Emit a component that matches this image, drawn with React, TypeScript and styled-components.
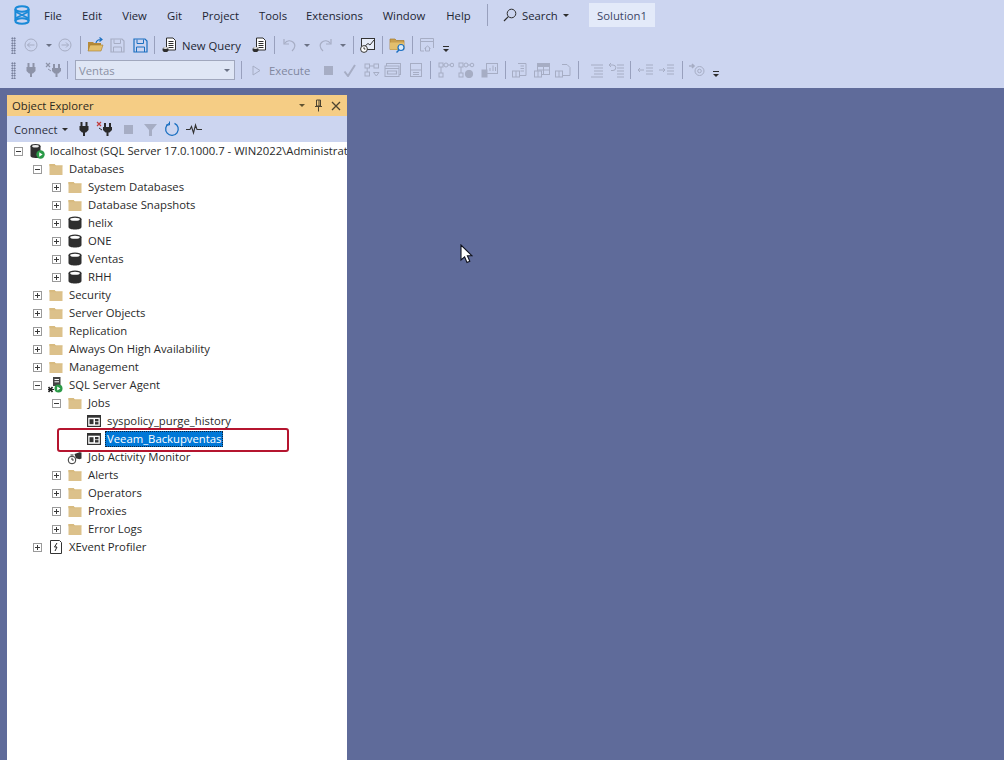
import React from "react";
import styled, { createGlobalStyle } from "styled-components";

const Global = createGlobalStyle`
  html, body { margin: 0; padding: 0; background: #5f6b9a; }
  * { box-sizing: border-box; }
  #root { width: 1004px; height: 760px; overflow: hidden; }
`;

const UI = `"Open Sans", Roboto, "Liberation Sans", sans-serif`;

const Page = styled.div`
  position: relative;
  width: 1004px;
  height: 760px;
  overflow: hidden;
  display: flex;
  flex-direction: column;
  background: #5f6b9a;
  font-family: ${UI};
  font-size: 11.3px;
  color: #222533;
`;
const Chrome = styled.header`
  height: 88px;
  background: #ccd5f0;
  display: flex;
  flex-direction: column;
`;
const MenuRow = styled.div`
  height: 30px;
  display: flex;
  align-items: center;
  padding-left: 14px;
`;
const Logo = styled.svg`
  width: 16px;
  height: 20px;
  margin-right: 4px;
`;
const MenuItem = styled.span<{ $w: number }>`
  width: ${(p) => p.$w}px;
  text-align: center;
  white-space: nowrap;
`;
const MenuDivider = styled.span`
  width: 1px;
  height: 22px;
  background: #98a0bd;
  margin: 0 15px 0 6px;
`;
const SearchBox = styled.div`
  width: 72px;
  display: flex;
  align-items: center;
  gap: 5px;
`;
const SolutionTag = styled.div`
  margin-left: 14px;
  width: 66px;
  height: 24px;
  background: #e3eaf9;
  display: flex;
  align-items: center;
  justify-content: center;
  color: #3c4566;
`;
const ToolRow = styled.div<{ $h: number }>`
  height: ${(p) => p.$h}px;
  display: flex;
  align-items: center;
  padding-left: 8px;
`;
const Slot = styled.span<{ $w: number }>`
  width: ${(p) => p.$w}px;
  flex: none;
  display: flex;
  align-items: center;
  justify-content: center;
  & > svg { flex: none; }
`;
const Grip = styled.span`
  width: 5px;
  height: 17px;
  margin: 0 4px 0 3px;
  flex: none;
  background-image: radial-gradient(circle, #5c6480 0.75px, transparent 0.95px);
  background-size: 2.5px 2.5px;
`;
const VSep = styled.span`
  width: 1px;
  height: 18px;
  background: #98a0bd;
  flex: none;
`;
const NewQueryLabel = styled.span`
  width: 68px;
  flex: none;
  color: #222533;
  white-space: nowrap;
`;
const ExecuteLabel = styled.span`
  width: 53px;
  padding-left: 4px;
  flex: none;
  color: #7f869e;
`;
const DbSelect = styled.div`
  width: 160px;
  height: 20px;
  flex: none;
  border: 1px solid #a0a7bd;
  background: #dfe6f5;
  color: #8b91a4;
  display: flex;
  align-items: center;
  justify-content: space-between;
  padding: 0 4px 0 3px;
`;
const Caret = styled.span<{ $c?: string }>`
  width: 0;
  height: 0;
  border-left: 3px solid transparent;
  border-right: 3px solid transparent;
  border-top: 3px solid ${(p) => p.$c ?? "#6b7285"};
  flex: none;
`;
const Overflow = styled.span`
  width: 6px;
  height: 6px;
  flex: none;
  margin-top: 7px;
  border-top: 1px solid #2d2d2d;
  display: flex;
  justify-content: center;
  padding-top: 2px;
  &::after {
    content: "";
    border-left: 3px solid transparent;
    border-right: 3px solid transparent;
    border-top: 3px solid #2d2d2d;
  }
`;
const Workspace = styled.main`
  flex: 1;
  min-height: 0;
  padding: 7px 0 0 7px;
  display: flex;
`;
const Panel = styled.section`
  width: 340px;
  display: flex;
  flex-direction: column;
  background: #fff;
  overflow: hidden;
`;
const PanelTitle = styled.div`
  height: 21px;
  background: #f5cd85;
  display: flex;
  align-items: center;
  padding-left: 5px;
  color: #2d2a22;
`;
const TitleText = styled.span`
  flex: 1;
`;
const TitleBtn = styled.span`
  width: 17px;
  display: flex;
  justify-content: center;
  align-items: center;
`;
const PanelTools = styled.div`
  height: 26px;
  background: #ccd5f0;
  display: flex;
  align-items: center;
  padding-left: 7px;
`;
const ConnectBtn = styled.span`
  width: 59px;
  flex: none;
  display: flex;
  align-items: center;
  gap: 4px;
  color: #2d3040;
`;
const Tree = styled.ul`
  list-style: none;
  margin: 0;
  padding: 0;
`;
const Row = styled.li<{ $level: number }>`
  height: 18px;
  display: flex;
  align-items: center;
  white-space: nowrap;
  padding-left: ${(p) => 7 + p.$level * 19}px;
  color: #2a2a2a;
`;
const Toggle = styled.span<{ $open?: boolean; $none?: boolean }>`
  width: 9px;
  height: 9px;
  flex: none;
  position: relative;
  border: 1px solid ${(p) => (p.$none ? "transparent" : "#9a9a9a")};
  margin-right: 6px;
  &::before {
    content: "";
    display: ${(p) => (p.$none ? "none" : "block")};
    position: absolute;
    left: 1px;
    top: 3px;
    width: 5px;
    height: 1px;
    background: #3a3a3a;
  }
  &::after {
    content: "";
    display: ${(p) => (p.$none || p.$open ? "none" : "block")};
    position: absolute;
    left: 3px;
    top: 1px;
    width: 1px;
    height: 5px;
    background: #3a3a3a;
  }
`;
const IconBox = styled.span`
  width: 16px;
  height: 16px;
  flex: none;
  display: flex;
  align-items: center;
  justify-content: center;
`;
const Label = styled.span<{ $selected?: boolean }>`
  margin-left: 3px;
  padding: 0 2px;
  height: 16px;
  line-height: 16px;
  background: ${(p) => (p.$selected ? "#0078d7" : "transparent")};
  color: ${(p) => (p.$selected ? "#fff" : "inherit")};
  outline: ${(p) => (p.$selected ? "1px dotted #10243a" : "none")};
  outline-offset: -1px;
`;
const Highlight = styled.div`
  position: absolute;
  left: 57px;
  top: 428px;
  width: 232px;
  height: 24px;
  border: 2px solid #b5152f;
  border-radius: 3px;
  pointer-events: none;
`;
const Cursor = styled.svg`
  position: absolute;
  left: 460px;
  top: 244px;
  width: 13px;
  height: 20px;
`;

const Ic = ({ w = 16, h = 16, children }: { w?: number; h?: number; children: React.ReactNode }) => (
  <svg width={w} height={h} viewBox={`0 0 ${w} ${h}`} fill="none">{children}</svg>
);

const G = "#a6adc4";
const D = "#2b2b2b";

const Folder = () => (
  <Ic>
    <path d="M1.5 3h5l1.3 1.6h6.7V14h-13z" fill="#dcc18b" />
    <path d="M1.5 3h5l1.3 1.6h6.7v.7h-13z" fill="#d8bb80" />
  </Ic>
);
const Db = () => (
  <Ic>
    <path d="M1.5 4v8c0 1.6 2.6 2.5 6.5 2.5s6.5-.9 6.5-2.5V4z" fill="#2e2e2e" />
    <ellipse cx="8" cy="4" rx="6.5" ry="2.6" fill="#2e2e2e" />
    <ellipse cx="8" cy="4.2" rx="4.8" ry="1.5" fill="#fff" />
  </Ic>
);
const JobIcon = () => (
  <Ic w={14} h={12}>
    <rect x="0.6" y="0.6" width="12.8" height="10.8" fill="#fff" stroke="#333" strokeWidth="1.2" />
    <rect x="0.5" y="0.5" width="13" height="2.2" fill="#333" />
    <rect x="2.5" y="4.2" width="4" height="5" fill="#333" />
    <rect x="8" y="4" width="3.5" height="2.4" fill="#333" />
    <rect x="8" y="7.1" width="3.5" height="2.4" fill="#333" />
  </Ic>
);
const ServerIcon = () => (
  <Ic>
    <path d="M1.5 3.5v9.5c0 1 2.3 2 5 2h5V3.5z" fill="#303030" />
    <ellipse cx="6.5" cy="3.2" rx="5" ry="2.2" fill="#303030" />
    <ellipse cx="6.5" cy="3.3" rx="3.4" ry="1.2" fill="#eee" />
    <circle cx="11.5" cy="11.5" r="4.2" fill="#2a9a47" />
    <path d="M10.2 9.3v4.4l3.4-2.2z" fill="#fff" />
  </Ic>
);
const AgentIcon = () => (
  <Ic>
    <rect x="5" y="0" width="7.5" height="9" fill="#444" />
    <path d="M6.5 2.5h4.5M6.5 4.8h4.5" stroke="#fff" />
    <path d="M0.5 10l4 5M4.5 10l-4 5" stroke="#222" strokeWidth="1.7" />
    <path d="M0 12.5h6" stroke="#222" />
    <circle cx="10.5" cy="11.5" r="4" fill="#2a9a47" />
    <path d="M9.2 9.5v4l3.2-2z" fill="#fff" />
  </Ic>
);
const MonitorIcon = () => (
  <Ic>
    <circle cx="5" cy="11" r="3.8" fill="#fff" stroke="#333" />
    <path d="M5 8.8V11h1.8" stroke="#333" />
    <path d="M3.5 6h3" stroke="#333" />
    <path d="M7.5 5l5-1.8 2 .3v6l-2 .8-3.6-1z" fill="#333" />
  </Ic>
);
const XEventIcon = () => (
  <Ic>
    <path d="M2.5 1.5h9l2 2v11h-11z" fill="#fff" stroke="#333" />
    <path d="M9 4L6.5 8H9l-2 4" stroke="#222" />
  </Ic>
);
const PlugIcon = ({ c = D }: { c?: string }) => (
  <Ic w={12} h={16}>
    <path d="M3.5 1v4M8.5 1v4" stroke={c} strokeWidth="2" />
    <path d="M1.5 5h9v4l-2.5 2.5H4L1.5 9z" fill={c} />
    <path d="M6 11v4" stroke={c} strokeWidth="2" />
  </Ic>
);
const UnplugIcon = ({ c = D, x = "#c23b3b" }: { c?: string; x?: string }) => (
  <Ic w={18} h={16}>
    <path d="M1 1l4 4M5 1L1 5" stroke={x} strokeWidth="1.2" />
    <path d="M9 2v4M14 2v4" stroke={c} strokeWidth="2" />
    <path d="M7 6h9v3l-2.5 2.5h-4L7 9z" fill={c} />
    <path d="M11.5 11v4" stroke={c} strokeWidth="2" />
    <path d="M3 7l3 2" stroke={c} />
  </Ic>
);
const NewQueryIcon = () => (
  <Ic>
    <path d="M4.5 1h6.5l2.5 2.5V13H4.5z" fill="#fff" stroke="#2e2e2e" />
    <path d="M6.5 4.5h5M6.5 6.5h5M6.5 8.5h5M6.5 10.5h5" stroke="#2e2e2e" />
    <ellipse cx="3.5" cy="12.5" rx="3" ry="2.6" fill="#2e2e2e" />
    <ellipse cx="3.5" cy="11" rx="2.4" ry="1" fill="#ddd" />
  </Ic>
);
const CircleArrow = ({ flip }: { flip?: boolean }) => (
  <Ic w={14} h={14}>
    <circle cx="7" cy="7" r="6" stroke={G} />
    <path d={flip ? "M3.5 7h7M8 4.5L10.5 7 8 9.5" : "M10.5 7h-7M6 4.5L3.5 7 6 9.5"} stroke={G} />
  </Ic>
);
const OpenFolder = () => (
  <Ic w={18} h={16}>
    <path d="M1 5h5l1 1h7v8H1z" fill="#b68a3a" />
    <path d="M1 14l2-6h13l-2 6z" fill="#e3bf6d" stroke="#a67c2c" strokeWidth="0.6" />
    <path d="M9 6c.5-2.5 2.5-3.5 5-3.5M12.5 0.5l2.5 2-2.5 2" stroke="#1a6fc0" strokeWidth="1.2" />
  </Ic>
);
const Save = ({ c }: { c: string }) => (
  <Ic w={15} h={15}>
    <path d="M1 1h11l2 2v11H1z" stroke={c} strokeWidth="1.2" />
    <path d="M4 1.5v4h6.5v-4M3.5 14V9h8v5" stroke={c} />
  </Ic>
);
const Undo = ({ flip }: { flip?: boolean }) => (
  <Ic>
    <g transform={flip ? "translate(16,0) scale(-1,1)" : undefined}>
      <path d="M2 2v5h5" stroke={G} strokeWidth="1.2" />
      <path d="M2.5 6.5C5 3 9 3 11.5 5.5c2.2 2.3 1.5 5.5-1.5 8.5" stroke={G} strokeWidth="1.2" />
    </g>
  </Ic>
);
const ChartBox = () => (
  <Ic>
    <rect x="1.5" y="1.5" width="13" height="11" fill="#e8edf9" stroke="#333" />
    <path d="M5 9l3-2.5 2 1.5 4-5" stroke="#333" />
    <circle cx="4" cy="12" r="3.4" fill="#fff" stroke="#333" />
    <path d="M4 10.3V12h1.4" stroke="#333" />
  </Ic>
);
const FolderSearch = () => (
  <Ic w={18} h={18}>
    <path d="M1 3h5l1.5 1.5h7.5v9H1z" fill="#c99f4e" stroke="#a67c2c" strokeWidth="0.7" />
    <path d="M1 6.5h14v7H1z" fill="#e3bf6d" />
    <circle cx="12" cy="11.5" r="3" fill="#dcecfa" stroke="#1a6fc0" strokeWidth="1.2" />
    <path d="M10 14l-2.5 2.5" stroke="#1a6fc0" strokeWidth="1.4" />
  </Ic>
);
const WindowHome = () => (
  <Ic>
    <path d="M5 14H1.5V1.5h13V11" stroke={G} />
    <path d="M1.5 4.5h13" stroke={G} />
    <path d="M5.5 11.5l3-2.5 3 2.5M6.5 11v3h4v-3" stroke={G} />
  </Ic>
);
const TinyBox = ({ x, y }: { x: number; y: number }) => (
  <g>
    <rect x={x} y={y} width="7" height="6" fill="#ccd5f0" stroke={G} />
    <path d={`M${x + 3.5} ${y}v6`} stroke={G} />
  </g>
);
const GreyBlock = ({ kind }: { kind: number }) => (
  <Ic w={18} h={16}>
    {kind === 0 && <g stroke={G}><rect x="2" y="2" width="4.5" height="4" /><rect x="11" y="2" width="4.5" height="4" /><rect x="2" y="10" width="4.5" height="4" /><path d="M10.5 10.5h5.5l-2.7 3.5z" /><path d="M6.5 4h4.5M4.2 6v4" /></g>}
    {kind === 1 && <g stroke={G}><rect x="2.5" y="1.5" width="14" height="11" /><rect x="1" y="4" width="14" height="10.5" fill="#ccd5f0" /><path d="M1 6.5h14M3.5 9h9v3h-9z" strokeWidth="1.2" /></g>}
    {kind === 2 && <g stroke={G}><rect x="3.5" y="1.5" width="11" height="13" /><path d="M3.5 8h11M6 10.5h6M6 12.5h6" /></g>}
    {kind === 3 && <g stroke={G}><rect x="3" y="1" width="4" height="4" /><rect x="3" y="11" width="4" height="4" /><circle cx="10" cy="3" r="2" /><circle cx="16" cy="3" r="1.8" /><path d="M5 5v6M7 3h1M12 3h2" /></g>}
    {kind === 4 && <g stroke={G}><rect x="1" y="1" width="4" height="4" /><rect x="1" y="11" width="4" height="4" /><circle cx="8" cy="3" r="2" /><circle cx="14" cy="3" r="1.8" /><path d="M3 5v6M10 3h2" /><circle cx="11" cy="12" r="3.7" fill={G} /></g>}
    {kind === 5 && <g stroke={G}><rect x="1" y="8" width="5" height="7" fill={G} /><rect x="5.5" y="1.5" width="11" height="10" /><path d="M9 9V6M12 9V3.5M14.5 9V5" /></g>}
    {kind === 6 && <g stroke={G}><path d="M7 1.5h8v12H9" /><path d="M9.5 4h3.5M9.5 6.5h3.5M9.5 9h3.5" /><TinyBox x={1.5} y={9} /></g>}
    {kind === 7 && <g stroke={G}><rect x="4.5" y="1.5" width="12" height="11" /><path d="M4.5 1.5h12v3h-12z" fill={G} /><path d="M4.5 8h12M10.5 1.5v11" /><TinyBox x={1.5} y={9} /></g>}
    {kind === 8 && <g stroke={G}><path d="M8 2.5h5l3 3v8H9" /><TinyBox x={1.5} y={9} /></g>}
    {kind === 9 && <g stroke={G}><path d="M4 3h12M7 6h9M7 9h9M7 12h9M4 15h12" /></g>}
    {kind === 10 && <g stroke={G}><path d="M9 6h7M9 9h7M9 12h7M9 15h7M9 3h7" /><path d="M1 3l2-2M1 3l2 2M1 3h4a2.5 2.5 0 0 1 0 5.5H3" /></g>}
    {kind === 11 && <g stroke={G}><path d="M9 3h7M9 6h7M9 9h7M9 12h7" /><path d="M7 8H1M3 6L1 8l2 2" /></g>}
    {kind === 12 && <g stroke={G}><path d="M9 3h7M9 6h7M9 9h7M9 12h7" /><path d="M1 8h6M5 6l2 2-2 2" /></g>}
    {kind === 13 && <g stroke={G}><circle cx="11.5" cy="9" r="4.5" /><circle cx="11.5" cy="9" r="1.8" /><path d="M1 4h5M4 2l2 2-2 2" strokeWidth="1.6" /></g>}
  </Ic>
);
const Sep = ({ w = 12 }: { w?: number }) => <Slot $w={w}><VSep /></Slot>;

type Node = { t: string; l: number; i: "f" | "d" | "s" | "a" | "j" | "m" | "x"; o?: boolean; n?: boolean; sel?: boolean };
const nodes: Node[] = [
  { t: "localhost (SQL Server 17.0.1000.7 - WIN2022\\Administrat", l: 0, i: "s", o: true },
  { t: "Databases", l: 1, i: "f", o: true },
  { t: "System Databases", l: 2, i: "f" },
  { t: "Database Snapshots", l: 2, i: "f" },
  { t: "helix", l: 2, i: "d" },
  { t: "ONE", l: 2, i: "d" },
  { t: "Ventas", l: 2, i: "d" },
  { t: "RHH", l: 2, i: "d" },
  { t: "Security", l: 1, i: "f" },
  { t: "Server Objects", l: 1, i: "f" },
  { t: "Replication", l: 1, i: "f" },
  { t: "Always On High Availability", l: 1, i: "f" },
  { t: "Management", l: 1, i: "f" },
  { t: "SQL Server Agent", l: 1, i: "a", o: true },
  { t: "Jobs", l: 2, i: "f", o: true },
  { t: "syspolicy_purge_history", l: 3, i: "j", n: true },
  { t: "Veeam_Backupventas", l: 3, i: "j", n: true, sel: true },
  { t: "Job Activity Monitor", l: 2, i: "m", n: true },
  { t: "Alerts", l: 2, i: "f" },
  { t: "Operators", l: 2, i: "f" },
  { t: "Proxies", l: 2, i: "f" },
  { t: "Error Logs", l: 2, i: "f" },
  { t: "XEvent Profiler", l: 1, i: "x" },
];
const icons = { f: Folder, d: Db, s: ServerIcon, a: AgentIcon, j: JobIcon, m: MonitorIcon, x: XEventIcon };

const menus: [string, number][] = [
  ["File", 38], ["Edit", 40], ["View", 45], ["Git", 35], ["Project", 57], ["Tools", 48], ["Extensions", 75], ["Window", 64], ["Help", 45],
];

export default function App() {
  return (
    <Page>
      <Global />
      <Chrome>
        <MenuRow>
          <Logo viewBox="0 0 16 20" fill="none" stroke="#1a8ad8" strokeWidth="2">
            <ellipse cx="8" cy="4" rx="6.6" ry="2.8" />
            <ellipse cx="8" cy="16" rx="6.6" ry="2.8" />
            <path d="M1.4 4v12M14.6 4v12" />
            <path d="M2 7l12 6M14 7L2 13" strokeWidth="1.8" />
          </Logo>
          {menus.map(([m, w]) => <MenuItem key={m} $w={w}>{m}</MenuItem>)}
          <MenuDivider />
          <SearchBox>
            <svg width="14" height="14" viewBox="0 0 14 14" fill="none">
              <circle cx="8.5" cy="5.5" r="4.3" stroke="#2d2d2d" />
              <path d="M5.3 8.7L1 13" stroke="#2d2d2d" strokeWidth="1.2" />
            </svg>
            <span>Search</span>
            <Caret $c="#2d2d2d" />
          </SearchBox>
          <SolutionTag>Solution1</SolutionTag>
        </MenuRow>
        <ToolRow $h={30}>
          <Grip />
          <Slot $w={22}><CircleArrow /></Slot>
          <Slot $w={14}><Caret /></Slot>
          <Slot $w={18}><CircleArrow flip /></Slot>
          <Sep />
          <Slot $w={20}><OpenFolder /></Slot>
          <Slot $w={23}><Save c={G} /></Slot>
          <Slot $w={22}><Save c="#1a6fc0" /></Slot>
          <Sep w={6} />
          <Slot $w={25}><NewQueryIcon /></Slot>
          <NewQueryLabel>New Query</NewQueryLabel>
          <Slot $w={20}><NewQueryIcon /></Slot>
          <Sep w={8} />
          <Slot $w={24}><Undo /></Slot>
          <Slot $w={10}><Caret /></Slot>
          <Slot $w={26}><Undo flip /></Slot>
          <Slot $w={10}><Caret /></Slot>
          <Sep w={10} />
          <Slot $w={20}><ChartBox /></Slot>
          <Sep w={8} />
          <Slot $w={24}><FolderSearch /></Slot>
          <Sep w={4} />
          <Slot $w={26}><WindowHome /></Slot>
          <Slot $w={12}><Overflow /></Slot>
        </ToolRow>
        <ToolRow $h={20}>
          <Grip />
          <Slot $w={22}><PlugIcon c="#8d93a8" /></Slot>
          <Slot $w={24}><UnplugIcon c="#8d93a8" x="#8d93a8" /></Slot>
          <Sep w={2} />
          <Slot $w={7} />
          <DbSelect>Ventas<Caret /></DbSelect>
          <Sep w={12} />
          <Slot $w={18}>
            <svg width="9" height="11" viewBox="0 0 9 11" fill="none"><path d="M1 1l7 4.5L1 10z" stroke={G} /></svg>
          </Slot>
          <ExecuteLabel>Execute</ExecuteLabel>
          <Slot $w={20}>
            <svg width="9" height="9" viewBox="0 0 9 9"><rect width="9" height="9" fill={G} /></svg>
          </Slot>
          <Slot $w={22}>
            <svg width="13" height="13" viewBox="0 0 13 13" fill="none"><path d="M1.5 7.5L5 12l7-11" stroke={G} strokeWidth="2" /></svg>
          </Slot>
          <Slot $w={24}><GreyBlock kind={0} /></Slot>
          <Slot $w={18}><GreyBlock kind={1} /></Slot>
          <Slot $w={28}><GreyBlock kind={2} /></Slot>
          <Sep w={1} />
          <Slot $w={28}><GreyBlock kind={3} /></Slot>
          <Slot $w={16}><GreyBlock kind={4} /></Slot>
          <Slot $w={30}><GreyBlock kind={5} /></Slot>
          <Sep w={1} />
          <Slot $w={28}><GreyBlock kind={6} /></Slot>
          <Slot $w={16}><GreyBlock kind={7} /></Slot>
          <Slot $w={26}><GreyBlock kind={8} /></Slot>
          <Sep w={4} />
          <Slot $w={32}><GreyBlock kind={9} /></Slot>
          <Slot $w={10}><GreyBlock kind={10} /></Slot>
          <Sep w={16} />
          <Slot $w={16}><GreyBlock kind={11} /></Slot>
          <Slot $w={26}><GreyBlock kind={12} /></Slot>
          <Sep w={4} />
          <Slot $w={26}><GreyBlock kind={13} /></Slot>
          <Slot $w={12}><Overflow /></Slot>
        </ToolRow>
      </Chrome>
      <Workspace>
        <Panel>
          <PanelTitle>
            <TitleText>Object Explorer</TitleText>
            <TitleBtn><Caret $c="#5f5230" /></TitleBtn>
            <TitleBtn>
              <svg width="9" height="13" viewBox="0 0 9 13" fill="none">
                <path d="M2.5 1h4v6h-4zM1 7.5h7M4.5 8v4.5M5 1v6" stroke="#4d4430" />
              </svg>
            </TitleBtn>
            <TitleBtn>
              <svg width="10" height="10" viewBox="0 0 10 10" fill="none"><path d="M1 1l8 8M9 1L1 9" stroke="#4d4430" strokeWidth="1.3" /></svg>
            </TitleBtn>
            <Slot $w={3} />
          </PanelTitle>
          <PanelTools>
            <ConnectBtn>Connect<Caret $c="#2d2d2d" /></ConnectBtn>
            <Slot $w={22}><PlugIcon /></Slot>
            <Slot $w={20}><UnplugIcon /></Slot>
            <Slot $w={26}>
              <svg width="9" height="9" viewBox="0 0 9 9"><rect width="9" height="9" fill={G} /></svg>
            </Slot>
            <Slot $w={18}>
              <svg width="13" height="13" viewBox="0 0 13 13"><path d="M0 1h13L8 7v6H5V7z" fill={G} /></svg>
            </Slot>
            <Slot $w={26}>
              <svg width="16" height="16" viewBox="0 0 16 16" fill="none">
                <path d="M10.5 2.3A6.3 6.3 0 1 1 5 2.5" stroke="#1a6fc0" strokeWidth="1.3" />
                <path d="M5.5 0.5v3.5H2" stroke="#1a6fc0" />
              </svg>
            </Slot>
            <Slot $w={18}>
              <svg width="16" height="12" viewBox="0 0 16 12" fill="none">
                <path d="M0 6.5h4l1.5-3 2 6.5 2-8 1.5 4.5H16" stroke="#333" strokeWidth="1.1" />
              </svg>
            </Slot>
          </PanelTools>
          <Tree>
            {nodes.map((n) => {
              const I = icons[n.i];
              return (
                <Row key={n.t} $level={n.l}>
                  <Toggle $open={n.o} $none={n.n} />
                  <IconBox><I /></IconBox>
                  <Label $selected={n.sel}>{n.t}</Label>
                </Row>
              );
            })}
          </Tree>
        </Panel>
      </Workspace>
      <Highlight />
      <Cursor viewBox="0 0 13 20">
        <path d="M1 1v15l3.6-3.2L7 18.5l2.8-1.2-2.4-5.5H12z" fill="#fff" stroke="#10131f" strokeWidth="1.1" />
      </Cursor>
    </Page>
  );
}
